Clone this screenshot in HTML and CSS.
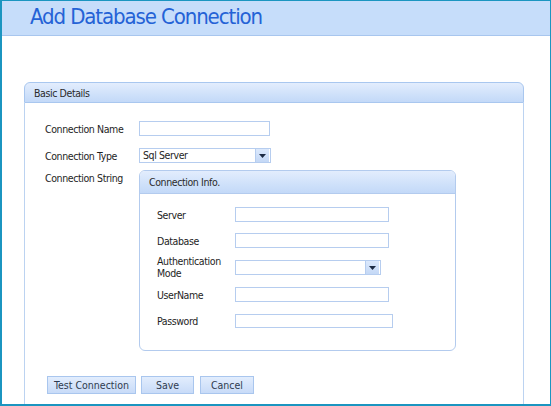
FILE: index.html
```html
<!DOCTYPE html>
<html lang="en">
<head>
  <meta charset="UTF-8">
  <title>Add Database Connection</title>
  <link rel="stylesheet" href="styles.css">
</head>
<body>
<div class="frame">
  <div class="header">
    <h1>Add Database Connection</h1>
  </div>

  <div class="panel">
    <div class="panel-head">Basic Details</div>
    <div class="panel-body">
      <div class="form">
        <label class="lbl" for="connName">Connection Name</label>
        <input class="txt name" type="text" id="connName">

        <label class="lbl">Connection Type</label>
        <div class="select type">
          <span class="select-text">Sql Server</span>
          <span class="arrow"><svg width="7" height="4" viewBox="0 0 7 4"><path d="M0 0h7L3.5 4z" fill="#1d2b44"/></svg></span>
        </div>

        <label class="lbl string">Connection String</label>
        <div class="inner">
          <div class="inner-head">Connection Info.</div>
          <div class="inner-body">
            <label class="lbl" for="server">Server</label>
            <input class="txt wide" type="text" id="server">

            <label class="lbl" for="database">Database</label>
            <input class="txt wide" type="text" id="database">

            <label class="lbl two">Authentication Mode</label>
            <div class="select auth">
              <span class="select-text"></span>
              <span class="arrow"><svg width="7" height="4" viewBox="0 0 7 4"><path d="M0 0h7L3.5 4z" fill="#1d2b44"/></svg></span>
            </div>

            <label class="lbl" for="user">UserName</label>
            <input class="txt wide" type="text" id="user">

            <label class="lbl" for="pass">Password</label>
            <input class="txt pass" type="password" id="pass">
          </div>
        </div>
      </div>

      <div class="buttons">
        <button class="btn test">Test Connection</button>
        <button class="btn save">Save</button>
        <button class="btn cancel">Cancel</button>
      </div>
    </div>
  </div>
</div>
</body>
</html>
```

FILE: styles.css
```css
body {
  margin: 0;
  font-family: 'DejaVu Sans Condensed', 'DejaVu Sans', sans-serif;
  font-size: 10.5px;
  letter-spacing: -0.4px;
  color: #1e1e1e;
  background: #fff;
}
.frame {
  width: 551px;
  height: 406px;
  box-sizing: border-box;
  border: 1px solid #1b95c0;
  border-left-width: 2px;
  border-bottom-width: 2px;
  overflow: hidden;
  background: #fff;
}
.header {
  height: 34px;
  background: #c6ddfa;
  border-bottom: 1px solid #a8c6ee;
}
h1 {
  margin: 0;
  padding: 2px 0 0 28px;
  font-family: 'DejaVu Sans Condensed', 'DejaVu Sans', sans-serif;
  font-weight: normal;
  font-size: 22px;
  letter-spacing: -1.1px;
  line-height: 28px;
  color: #2462d6;
}
.panel {
  margin: 46px 0 0 22px;
  width: 500px;
}
.panel-head {
  height: 19px;
  line-height: 20px;
  padding-left: 9px;
  border: 1px solid #a9c7ef;
  border-radius: 6px 6px 0 0;
  background: linear-gradient(#e3edfd, #cfe1fa 60%, #c3d9f8);
  color: #2a2a2a;
}
.panel-body {
  height: 400px;
  border-left: 1px solid #bcd3f1;
  border-right: 1px solid #bcd3f1;
  padding: 18px 0 0 20px;
}
.form {
  display: grid;
  grid-template-columns: 94px auto;
  row-gap: 12px;
  align-items: center;
}
.lbl {
  line-height: 14px;
}
.txt {
  margin: 0;
  height: 15px;
  box-sizing: border-box;
  border: 1px solid #b6cdef;
  background: #fff;
  padding: 0 3px;
  font: inherit;
}
.name {
  width: 131px;
}
.select {
  display: flex;
  height: 15px;
  box-sizing: border-box;
  border: 1px solid #b6cdef;
  background: #fff;
}
.select-text {
  flex: 1;
  padding-left: 3px;
  line-height: 13px;
}
.arrow {
  width: 13px;
  margin: 0 1px 0 0;
  border-left: 1px solid #b6cdef;
  background: linear-gradient(#dce9fc, #c4d8f6);
  display: flex;
  align-items: center;
  justify-content: center;
}
.type {
  width: 132px;
}
.lbl.string {
  align-self: start;
  margin-top: -4px;
}
.inner {
  margin-top: -5px;
  width: 317px;
  height: 181px;
  box-sizing: border-box;
  border: 1px solid #b3cbee;
  border-radius: 6px;
  overflow: hidden;
}
.inner-head {
  height: 22px;
  line-height: 23px;
  padding-left: 9px;
  border-bottom: 1px solid #b3cbee;
  background: linear-gradient(#e3edfd, #cfe1fa 60%, #c3d9f8);
  color: #2a2a2a;
}
.inner-body {
  display: grid;
  grid-template-columns: 78px auto;
  row-gap: 11px;
  align-items: center;
  padding: 13px 0 0 17px;
}
.wide {
  width: 154px;
}
.auth {
  width: 146px;
}
.lbl.two {
  width: 70px;
  line-height: 12px;
  margin: -4px 0 -3px;
}
.pass {
  width: 158px;
  height: 14px;
  margin-top: 1px;
}
.buttons {
  display: flex;
  margin: 25px 0 0 2px;
}
.btn {
  height: 18px;
  padding: 0;
  margin-right: 5px;
  border: 1px solid #a9c6ee;
  background: linear-gradient(#e2edfd, #c8dbf8);
  font: inherit;
  color: #2f3b4f;
}
.test {
  width: 89px;
}
.save {
  width: 53px;
  margin-right: 6px;
}
.cancel {
  width: 54px;
}
```
